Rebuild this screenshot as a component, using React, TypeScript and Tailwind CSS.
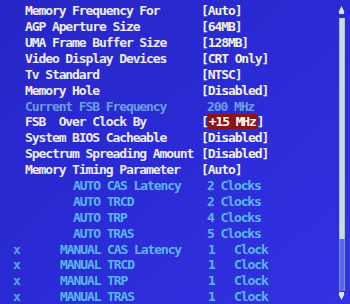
const font = { fontFamily: '"DejaVu Sans Mono", "Liberation Mono", monospace' };

type Row =
  | { kind: 'main'; label: string; value: string; hi?: boolean }
  | { kind: 'info'; label: string; value: string }
  | { kind: 'auto'; label: string; value: string }
  | { kind: 'manual'; label: string; num: string; value: string };

const rows: Row[] = [
  { kind: 'main', label: 'Memory Frequency For', value: '[Auto]' },
  { kind: 'main', label: 'AGP Aperture Size', value: '[64MB]' },
  { kind: 'main', label: 'UMA Frame Buffer Size', value: '[128MB]' },
  { kind: 'main', label: 'Video Display Devices', value: '[CRT Only]' },
  { kind: 'main', label: 'Tv Standard', value: '[NTSC]' },
  { kind: 'main', label: 'Memory Hole', value: '[Disabled]' },
  { kind: 'info', label: 'Current FSB Frequency', value: '200 MHz' },
  { kind: 'main', label: 'FSB  Over Clock By', value: '+15 MHz', hi: true },
  { kind: 'main', label: 'System BIOS Cacheable', value: '[Disabled]' },
  { kind: 'main', label: 'Spectrum Spreading Amount', value: '[Disabled]' },
  { kind: 'main', label: 'Memory Timing Parameter', value: '[Auto]' },
  { kind: 'auto', label: 'AUTO CAS Latency', value: '2 Clocks' },
  { kind: 'auto', label: 'AUTO TRCD', value: '2 Clocks' },
  { kind: 'auto', label: 'AUTO TRP', value: '4 Clocks' },
  { kind: 'auto', label: 'AUTO TRAS', value: '5 Clocks' },
  { kind: 'manual', label: 'MANUAL CAS Latency', num: '1', value: 'Clock' },
  { kind: 'manual', label: 'MANUAL TRCD', num: '1', value: 'Clock' },
  { kind: 'manual', label: 'MANUAL TRP', num: '1', value: 'Clock' },
  { kind: 'manual', label: 'MANUAL TRAS', num: '1', value: 'Clock' },
];

function Line({ row }: { row: Row }) {
  if (row.kind === 'main') {
    return (
      <div className="flex h-[15.9px] items-center">
        <span className="w-[201px] shrink-0 pl-[25px] text-[#ececf4]">{row.label}</span>
        {row.hi ? (
          <span className="text-[#f2f2e4]">
            [<span className="bg-[#8c1414] px-[1px] text-white">{row.value}</span>]
          </span>
        ) : (
          <span className="text-[#f2f2e4]">{row.value}</span>
        )}
      </div>
    );
  }
  if (row.kind === 'info') {
    return (
      <div className="flex h-[15.9px] items-center text-[#6c9ce6]">
        <span className="w-[207px] shrink-0 pl-[25px]">{row.label}</span>
        <span>{row.value}</span>
      </div>
    );
  }
  if (row.kind === 'auto') {
    return (
      <div className="flex h-[15.9px] items-center text-[#5ab6ee]">
        <span className="w-[207px] shrink-0 pl-[73px]">{row.label}</span>
        <span>{row.value}</span>
      </div>
    );
  }
  return (
    <div className="flex h-[15.9px] items-center text-[#5ab6ee]">
      <span className="w-[60px] shrink-0 pl-[13px] text-[#55a6e0]">x</span>
      <span className="w-[148px] shrink-0">{row.label}</span>
      <span className="w-[26px] shrink-0">{row.num}</span>
      <span>{row.value}</span>
    </div>
  );
}

export default function App() {
  return (
    <div
      className="flex h-[304px] w-[350px] overflow-hidden bg-gradient-to-br from-[#2626c6] via-[#2b2bd6] to-[#3232e2] text-[13px] font-bold tracking-[-1.1px] whitespace-pre"
      style={font}
    >
      <div className="flex w-[338px] shrink-0 flex-col pt-[3px]">
        {rows.map((r, i) => (
          <Line key={i} row={r} />
        ))}
      </div>
      <div className="flex w-[7px] flex-col items-center pt-[6px] pb-[4px]">
        <svg width="7" height="9" viewBox="0 0 7 9" className="shrink-0">
          <path d="M3.5 0 L6.5 6 L0.5 6 Z" fill="#d8e8f0" />
          <rect x="1" y="6" width="5" height="2" fill="#d8e8f0" />
        </svg>
        <div className="mt-[3px] h-[223px] w-[6px] border-x border-[#a8c4d8] bg-[#c8dce8]" />
        <div className="h-[52px] w-[6px] border-x border-[#7a8ee0] bg-[#5a66e6]" />
        <svg width="7" height="9" viewBox="0 0 7 9" className="shrink-0">
          <rect x="1" y="1" width="5" height="2" fill="#d8e8f0" />
          <path d="M0.5 3 L6.5 3 L3.5 9 Z" fill="#d8e8f0" />
        </svg>
      </div>
    </div>
  );
}
